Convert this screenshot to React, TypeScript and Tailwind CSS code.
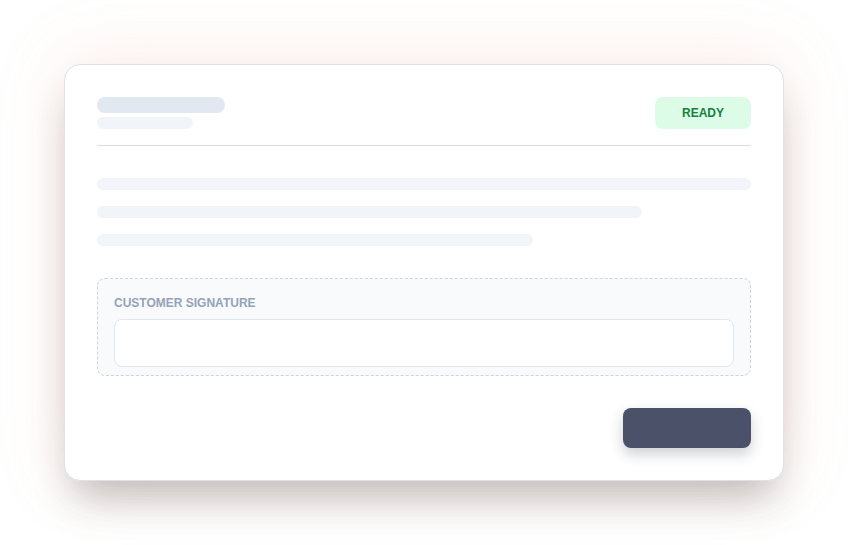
import React from 'react';

const Line: React.FC<{ width: string }> = ({ width }) => (
  <div className={`h-3 rounded-full bg-[#f1f4f8] ${width}`} />
);

const App: React.FC = () => {
  return (
    <div className="min-h-[545px] w-full bg-white p-16 font-['Liberation_Sans',Arial,sans-serif]">
      <div className="rounded-2xl border border-[#dde1ea] bg-white p-8 shadow-[0_26px_40px_-10px_rgba(40,30,30,0.28),0_-4px_70px_rgba(225,145,115,0.18)]">
        <div className="flex items-start justify-between border-b border-[#dedde6] pb-4">
          <div className="flex flex-col gap-1">
            <div className="h-4 w-32 rounded-full bg-[#e2e8f0]" />
            <div className="h-3 w-24 rounded-full bg-[#f1f4f8]" />
          </div>
          <div className="flex h-8 w-24 items-center justify-center rounded-lg bg-[#dcfce7] text-xs font-bold text-[#15803d]">
            READY
          </div>
        </div>

        <div className="mt-8 flex flex-col gap-4">
          <Line width="w-full" />
          <Line width="w-5/6" />
          <Line width="w-2/3" />
        </div>

        <div className="mt-8 rounded-lg border border-dashed border-[#cbd5e1] bg-[#f8fafc] px-4 pt-4 pb-2">
          <div className="mb-2 text-xs leading-4 font-bold text-[#94a3b8]">CUSTOMER SIGNATURE</div>
          <div className="h-12 rounded-lg border border-[#e2e8f0] bg-white" />
        </div>

        <div className="mt-8 flex justify-end">
          <button className="h-10 w-32 rounded-lg bg-[#4b5168] shadow-[0_6px_14px_rgba(30,35,55,0.22)]" />
        </div>
      </div>
    </div>
  );
};

export default App;
